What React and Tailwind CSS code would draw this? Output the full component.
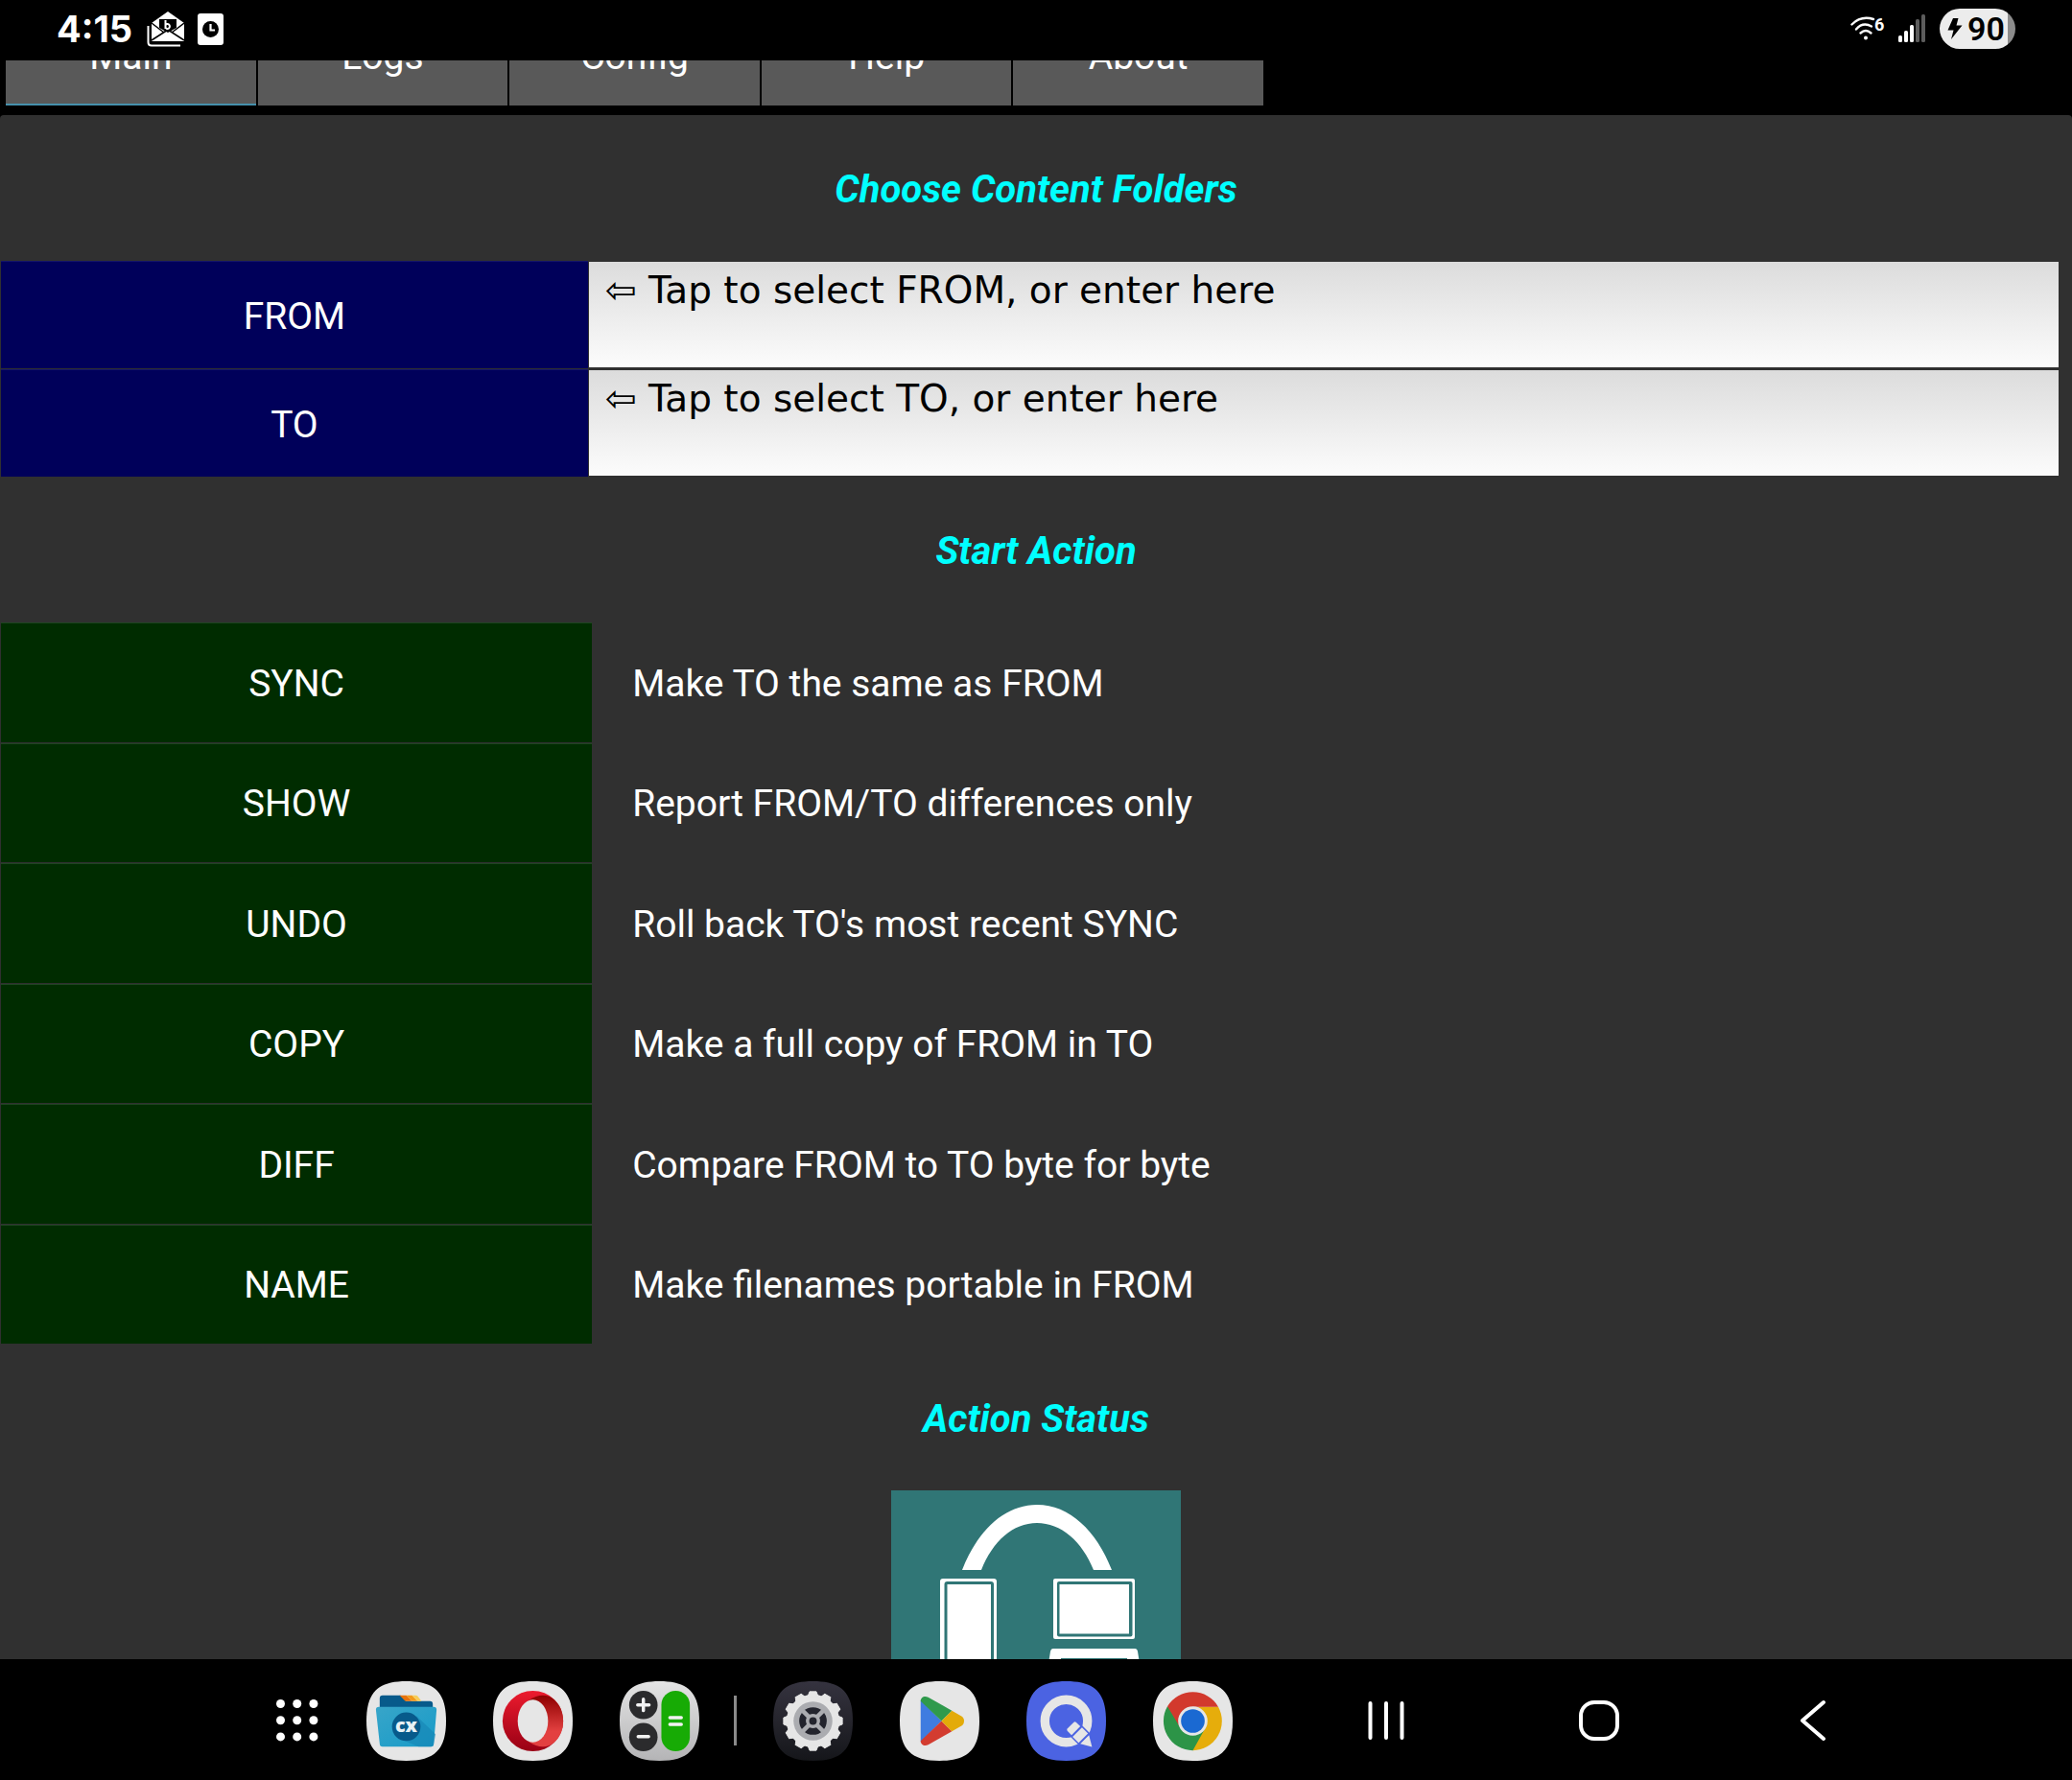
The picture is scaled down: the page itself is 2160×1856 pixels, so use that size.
const tabs = ["Main", "Logs", "Config", "Help", "About"];

const folders = [
  { name: "FROM", hint: "⇦ Tap to select FROM, or enter here" },
  { name: "TO", hint: "⇦ Tap to select TO, or enter here" },
];

const actions = [
  { name: "SYNC", text: "Make TO the same as FROM" },
  { name: "SHOW", text: "Report FROM/TO differences only" },
  { name: "UNDO", text: "Roll back TO's most recent SYNC" },
  { name: "COPY", text: "Make a full copy of FROM in TO" },
  { name: "DIFF", text: "Compare FROM to TO byte for byte" },
  { name: "NAME", text: "Make filenames portable in FROM" },
];

const SQUIRCLE = "M42 0C72 0 84 12 84 42S72 84 42 84 0 72 0 42 12 0 42 0Z";

const MailIcon = () => (
  <svg width="39" height="37" viewBox="0 0 39 37">
    <path d="M1.500 15V32Q1.500 35.500 5 35.500H35" fill="none" stroke="#fff" strokeWidth="2" />
    <path d="M5 12L22 0L39 12V31H5Z" fill="#fff" />
    <path d="M13 8H31V17L22 22L13 17Z" fill="#000" />
    <path d="M5 12L18 22M39 12L26 22M5 30L22 19L39 30" fill="none" stroke="#000" strokeWidth="1.500" />
    <path d="M19.500 9V18M19.500 14.500a2.300 2.600 0 1 1 0 2" fill="none" stroke="#fff" strokeWidth="2" />
  </svg>
);

const ClockIcon = () => (
  <svg width="27" height="33" viewBox="0 0 27 33">
    <rect width="27" height="33" rx="3" fill="#fff" />
    <circle cx="13.500" cy="16.500" r="8.500" fill="#000" />
    <path d="M13.500 11V17.500H18" fill="none" stroke="#fff" strokeWidth="2.200" />
  </svg>
);

const WifiIcon = () => (
  <svg width="36" height="26" viewBox="0 0 36 26">
    <g fill="none" stroke="#fff" strokeWidth="2.400" strokeLinecap="round">
      <path d="M1.500 8.500Q11 -1 24 3" />
      <path d="M6 13.500Q13 5.500 22 10.500" />
      <path d="M10.500 17.500Q16 12.500 21.500 17.500" />
    </g>
    <circle cx="16" cy="22.500" r="2" fill="#fff" />
    <text x="25" y="15" fill="#fff" fontFamily="Roboto, sans-serif" fontSize="18" fontWeight="700">
      6
    </text>
  </svg>
);

const SignalIcon = () => (
  <svg width="28" height="30" viewBox="0 0 28 30">
    <rect x="0" y="22" width="4" height="7" rx="1.500" fill="#fff" />
    <rect x="6" y="17" width="4" height="12" rx="1.500" fill="#fff" />
    <rect x="12" y="11" width="4" height="18" rx="1.500" fill="#fff" />
    <rect x="18" y="5" width="4" height="24" rx="1.500" fill="#5c5c5c" />
    <rect x="24" y="0" width="4" height="29" rx="1.500" fill="#5c5c5c" />
  </svg>
);

const StatusBar = () => (
  <header className="flex h-[63px] shrink-0 items-start justify-between bg-black px-[59px] text-white">
    <div className="flex items-center pt-[10px]">
      <time className="font-['Inter',sans-serif] text-[38px] leading-[40px] font-bold">4:15</time>
      <div className="ml-[15px] flex items-center gap-[14px]">
        <MailIcon />
        <ClockIcon />
      </div>
    </div>
    <div className="flex items-center pt-[9px]">
      <WifiIcon />
      <div className="mr-[15px] ml-[14px]">
        <SignalIcon />
      </div>
      <div className="flex h-[42px] w-[79px] items-center rounded-full bg-[linear-gradient(to_right,#ececec_90%,#8c8c8c_90%)] pl-[8px] text-black">
        <svg width="16" height="22" viewBox="0 0 16 22">
          <path d="M6 0H11.500L9.500 7.500H15.500L4 22L6.500 12.500H0.500Z" />
        </svg>
        <span className="ml-[5px] font-['Roboto',sans-serif] text-[34px] leading-[42px] font-semibold">90</span>
      </div>
    </div>
  </header>
);

const SectionTitle = ({ children }) => (
  <h2 className="flex h-[152px] items-center justify-center pt-[4px] text-[40px] leading-[48px] font-bold text-[#00ffff] italic">
    {children}
  </h2>
);

// phone and laptop joined by an arc
const AppLogo = () => (
  <svg className="mx-auto block shrink-0" width="302" height="302" viewBox="0 0 302 302">
    <rect width="302" height="302" fill="#307676" />
    <path d="M74 83C90 42 118 15 152 15S214 42 230 83H211C199 53 177 34 152 34S106 53 94 83Z" fill="#fff" />
    <rect x="51" y="92" width="59" height="120" rx="3" fill="#fff" />
    <rect x="55.500" y="95" width="51.500" height="106" rx="3" fill="#307676" />
    <rect x="58.500" y="98" width="45.500" height="100" fill="#fff" />
    <rect x="169" y="92" width="85" height="63" rx="2" fill="#fff" />
    <rect x="173" y="95" width="78.500" height="57.500" rx="2" fill="#307676" />
    <rect x="175.500" y="98" width="72.500" height="51.500" fill="#fff" />
    <path d="M169 165H254Q256.500 165 257 168L264 212H159L166 168Q166.500 165 169 165Z" fill="#fff" />
    <path d="M177 175H246L250 195H173Z" fill="#307676" />
  </svg>
);

const AppsIcon = () => (
  <svg width="44" height="44" viewBox="0 0 44 44" fill="#fff">
    {[4.5, 21.7, 38.9].map((y) =>
      [4.5, 21.7, 38.9].map((x) => <circle key={`${x}-${y}`} cx={x} cy={y} r="4.500" />)
    )}
  </svg>
);

const FilesIcon = () => (
  <svg width="83" height="83" viewBox="0 0 84 84">
    <defs>
      <linearGradient id="folder" x1="0" y1="0" x2="1" y2="1">
        <stop offset="0" stopColor="#38a5c9" />
        <stop offset="1" stopColor="#179bc8" />
      </linearGradient>
    </defs>
    <path d={SQUIRCLE} fill="#e6e6e6" />
    <path d="M14 30V18Q14 15 17 15H36L42 21H67Q70 21 70 24V30Z" fill="#075a8b" />
    <path d="M35 15H42L48 21H41Z" fill="#e8730c" />
    <path d="M42 15H48L54 21H48Z" fill="#f39a1b" />
    <path d="M48 15H52Q54 15 55 17L58 21H54Z" fill="#f7cd58" />
    <path d="M13 27H71Q74 27 74 30L71 66Q71 69 68 69H17Q14 69 14 66L10 30Q10 27 13 27Z" fill="url(#folder)" />
    <path d="M53 37L73 56L71 66Q71 69 68 69H55L36 61Z" fill="#1583b4" opacity=".6" />
    <circle cx="42" cy="48" r="15" fill="#075a8b" />
    <text x="42" y="54" textAnchor="middle" fill="#e8f1f5" fontFamily="Open Sans, sans-serif" fontSize="20" fontWeight="800">
      cx
    </text>
  </svg>
);

const OperaIcon = () => (
  <svg width="83" height="83" viewBox="0 0 84 84">
    <defs>
      <linearGradient id="operaRing" x1="0" y1="0" x2="0" y2="1">
        <stop offset="0" stopColor="#ec1b2e" />
        <stop offset="1" stopColor="#980014" />
      </linearGradient>
      <linearGradient id="operaInner" x1="0" y1="0" x2="0" y2="1">
        <stop offset="0" stopColor="#8d0000" />
        <stop offset=".7" stopColor="#e34040" />
        <stop offset="1" stopColor="#e34040" />
      </linearGradient>
    </defs>
    <path d={SQUIRCLE} fill="#e6e6e6" />
    <circle cx="42" cy="42" r="32" fill="url(#operaRing)" />
    <path d="M38 20C48 13 58 14 64 19C71 25 74 33 74 42S71 59 64 65C58 70 48 71 38 64Z" fill="url(#operaInner)" />
    <ellipse cx="42" cy="42" rx="16" ry="22.500" fill="#e6e6e6" />
  </svg>
);

const CalculatorIcon = () => (
  <svg width="83" height="83" viewBox="0 0 84 84">
    <defs>
      <linearGradient id="calc" x1="0" y1="0" x2="0" y2="1">
        <stop offset="0" stopColor="#e4e4e4" />
        <stop offset="1" stopColor="#b4b4b6" />
      </linearGradient>
    </defs>
    <path d={SQUIRCLE} fill="url(#calc)" />
    <circle cx="25" cy="25" r="15" fill="#2b2b2d" />
    <circle cx="25" cy="59" r="15" fill="#2b2b2d" />
    <rect x="44" y="10" width="30" height="64" rx="15" fill="#17ab05" />
    <path d="M19 25H31M25 19V31M19.500 58.500H30.500M53 38.500H65M53 45.500H65" stroke="#f2f2f2" strokeWidth="3.500" strokeLinecap="round" />
  </svg>
);

const SettingsIcon = () => (
  <svg width="83" height="83" viewBox="0 0 84 84">
    <defs>
      <linearGradient id="settings" x1="0" y1="0" x2="0" y2="1">
        <stop offset="0" stopColor="#35333f" />
        <stop offset="1" stopColor="#15161a" />
      </linearGradient>
    </defs>
    <path d={SQUIRCLE} fill="url(#settings)" />
    <circle cx="42" cy="42" r="28" fill="#e6e6e6" />
    {[0, 30, 60, 90, 120, 150, 180, 210, 240, 270, 300, 330].map((deg) => (
      <path key={deg} d="M36.500 16L38.500 11H45.500L47.500 16Z" fill="#e6e6e6" stroke="#e6e6e6" transform={`rotate(${deg} 42 42)`} />
    ))}
    <circle cx="42" cy="42" r="20.500" fill="#abacb0" />
    <circle cx="42" cy="42" r="14.500" fill="#23242d" />
    <path d="M31 31L53 53M53 31L31 53" stroke="#abacb0" strokeWidth="4.500" />
    <circle cx="42" cy="42" r="7.500" fill="#abacb0" />
    <circle cx="42" cy="42" r="4" fill="#23242d" />
  </svg>
);

const PlayIcon = () => (
  <svg width="83" height="83" viewBox="0 0 84 84">
    <path d={SQUIRCLE} fill="#e6e6e6" />
    <path d="M22 20L44 42L22 64Z" fill="#3f7ce0" />
    <path d="M22 21C22 17 26 15 30 17L55 31L44 42Z" fill="#2f9a4c" />
    <path d="M22 63C22 67 26 69 30 67L55 53L44 42Z" fill="#d33c30" />
    <path d="M55 31L66 37.500Q70 42 66 46.500L55 53L44 42Z" fill="#e3ab09" />
  </svg>
);

const NotesIcon = () => (
  <svg width="83" height="83" viewBox="0 0 84 84">
    <path d={SQUIRCLE} fill="#4b63e2" />
    <circle cx="42" cy="42" r="22.500" fill="none" stroke="#e6e6e6" strokeWidth="9.500" />
    <g transform="translate(48 48) rotate(-45)">
      <path d="M-8.500 -2Q-8.500 -4 -6.500 -4H6.500Q8.500 -4 8.500 -2V18L2 31H-2L-8.500 18Z" fill="#4b63e2" />
      <path d="M-6.500 6V0Q-6.500 -2 -4.500 -2H4.500Q6.500 -2 6.500 0V6Z" fill="#e6e6e6" />
      <path d="M-7 8H7V17H-7Z" fill="#e6e6e6" />
      <path d="M-6.500 19H6.500L0 30Z" fill="#e6e6e6" />
    </g>
  </svg>
);

const ChromeIcon = () => (
  <svg width="83" height="83" viewBox="0 0 84 84">
    <path d={SQUIRCLE} fill="#e6e6e6" />
    <path d="M42 42V27H68.800A31 31 0 0 1 42 73Z" fill="#e6ad0b" />
    <path d="M42 42L55 49.500L42 73A31 31 0 0 1 15.200 26.500Z" fill="#2c9447" />
    <path d="M42 42L29 49.500L15.200 26.500A31 31 0 0 1 68.800 27H42Z" fill="#d2392d" />
    <circle cx="42" cy="42" r="15.500" fill="#e6e6e6" />
    <circle cx="42" cy="42" r="12.500" fill="#1a69d2" />
  </svg>
);

const dockLeft = [
  { label: "Files", Icon: FilesIcon },
  { label: "Browser", Icon: OperaIcon },
  { label: "Calculator", Icon: CalculatorIcon },
];

const dockRight = [
  { label: "Settings", Icon: SettingsIcon },
  { label: "Store", Icon: PlayIcon },
  { label: "Notes", Icon: NotesIcon },
  { label: "Chrome", Icon: ChromeIcon },
];

const DockGroup = ({ items }) => (
  <div className="flex gap-[49px]">
    {items.map(({ label, Icon }) => (
      <button key={label} aria-label={label}>
        <Icon />
      </button>
    ))}
  </div>
);

const Taskbar = () => (
  <footer className="flex h-[126px] shrink-0 items-center justify-center bg-black pt-[2px] pl-[40px]">
    <div className="flex items-center">
      <button aria-label="Apps" className="mr-[50px]">
        <AppsIcon />
      </button>
      <DockGroup items={dockLeft} />
      <div className="mr-[38px] ml-[36px] h-[52px] w-[3px] bg-[#8a8a8a]" />
      <DockGroup items={dockRight} />
    </div>
    <div className="ml-[140px] flex items-center">
      <button aria-label="Recents">
        <svg width="40" height="44" viewBox="0 0 40 44" fill="none" stroke="#fff" strokeWidth="4" strokeLinecap="round">
          <path d="M3.500 4V40M20 4V40M36.500 4V40" />
        </svg>
      </button>
      <button aria-label="Home" className="mx-[180px]">
        <svg width="44" height="44" viewBox="0 0 44 44" fill="none" stroke="#fff" strokeWidth="4">
          <rect x="3" y="3" width="38" height="38" rx="14" />
        </svg>
      </button>
      <button aria-label="Back">
        <svg width="44" height="44" viewBox="0 0 44 44" fill="none" stroke="#fff" strokeWidth="4" strokeLinecap="round" strokeLinejoin="round">
          <path d="M32 3L10 22L32 41" />
        </svg>
      </button>
    </div>
  </footer>
);

const App = () => {
  return (
    <div className="flex h-screen flex-col overflow-hidden bg-black font-['Roboto',sans-serif] text-[39px] leading-[48px] text-white">
      <StatusBar />

      {/* tab strip is scrolled partly under the status bar */}
      <nav className="mb-[10px] flex h-[47px] shrink-0 items-end overflow-hidden pl-[6px]">
        <div className="grid w-[1311px] grid-cols-5 gap-[2px]">
          {tabs.map((tab, i) => (
            <button
              key={tab}
              className={`h-[100px] border-b-2 bg-[#595959] ${
                i === 0 ? "border-[#4690ac]" : "border-[#595959]"
              }`}
            >
              {tab}
            </button>
          ))}
        </div>
      </nav>

      <main className="min-h-0 flex-1 overflow-hidden rounded-t-[4px] bg-[#303030]">
        <SectionTitle>Choose Content Folders</SectionTitle>
        <div className="grid gap-px pr-[14px]">
          {folders.map(({ name, hint }) => (
            <div key={name} className="grid h-[112px] grid-cols-[2fr_5fr] gap-px">
              <button id={`pick-${name}`} className="ml-px border-t border-[#14146a] bg-[#00005a] pt-[2px]">
                {name}
              </button>
              <textarea
                aria-labelledby={`pick-${name}`}
                defaultValue={hint}
                className="my-px h-[110px] w-full resize-none overflow-hidden bg-linear-to-b from-[#dcdcdc] to-[#fcfcfc] px-[17px] pt-[6px] font-['DejaVu_Sans',sans-serif] text-[39px] leading-[48px] text-black outline-none"
              />
            </div>
          ))}
        </div>

        <SectionTitle>Start Action</SectionTitle>
        <div className="grid h-[753px] grid-rows-6">
          {actions.map(({ name, text }) => (
            <div key={name} className="grid grid-cols-[2fr_5fr] items-stretch">
              <button className="mb-px ml-px border-t border-[#1f4522] bg-[#002c00] pt-[2px]">{name}</button>
              <p className="flex items-center pt-[2px] pl-[42px]">{text}</p>
            </div>
          ))}
        </div>

        <SectionTitle>Action Status</SectionTitle>
        <AppLogo />
      </main>

      <Taskbar />
    </div>
  );
};

export default App;
